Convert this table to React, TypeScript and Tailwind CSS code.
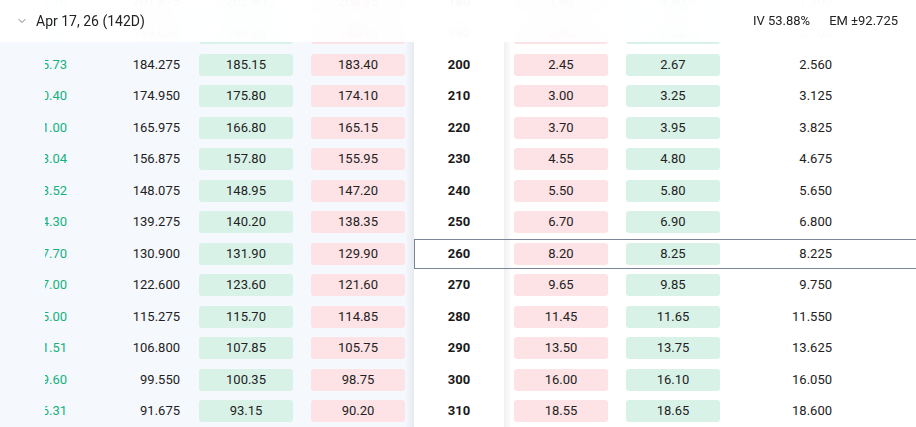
import { ChevronDown } from "lucide-react";

type Row = {
  strike: number;
  chg: string;
  mark: string;
  ask: string;
  bid: string;
  pBid: string;
  pAsk: string;
  pMark: string;
};

const rows: Row[] = [
  { strike: 180, chg: "+12.10", mark: "201.875", ask: "202.80", bid: "200.95", pBid: "1.60", pAsk: "1.80", pMark: "1.700" },
  { strike: 190, chg: "+11.44", mark: "193.050", ask: "193.95", bid: "192.15", pBid: "2.00", pAsk: "2.20", pMark: "2.100" },
  { strike: 200, chg: "+15.73", mark: "184.275", ask: "185.15", bid: "183.40", pBid: "2.45", pAsk: "2.67", pMark: "2.560" },
  { strike: 210, chg: "+10.40", mark: "174.950", ask: "175.80", bid: "174.10", pBid: "3.00", pAsk: "3.25", pMark: "3.125" },
  { strike: 220, chg: "+11.00", mark: "165.975", ask: "166.80", bid: "165.15", pBid: "3.70", pAsk: "3.95", pMark: "3.825" },
  { strike: 230, chg: "+13.04", mark: "156.875", ask: "157.80", bid: "155.95", pBid: "4.55", pAsk: "4.80", pMark: "4.675" },
  { strike: 240, chg: "+13.52", mark: "148.075", ask: "148.95", bid: "147.20", pBid: "5.50", pAsk: "5.80", pMark: "5.650" },
  { strike: 250, chg: "+14.30", mark: "139.275", ask: "140.20", bid: "138.35", pBid: "6.70", pAsk: "6.90", pMark: "6.800" },
  { strike: 260, chg: "+17.70", mark: "130.900", ask: "131.90", bid: "129.90", pBid: "8.20", pAsk: "8.25", pMark: "8.225" },
  { strike: 270, chg: "+17.00", mark: "122.600", ask: "123.60", bid: "121.60", pBid: "9.65", pAsk: "9.85", pMark: "9.750" },
  { strike: 280, chg: "+15.00", mark: "115.275", ask: "115.70", bid: "114.85", pBid: "11.45", pAsk: "11.65", pMark: "11.550" },
  { strike: 290, chg: "+11.51", mark: "106.800", ask: "107.85", bid: "105.75", pBid: "13.50", pAsk: "13.75", pMark: "13.625" },
  { strike: 300, chg: "+19.60", mark: "99.550", ask: "100.35", bid: "98.75", pBid: "16.00", pAsk: "16.10", pMark: "16.050" },
  { strike: 310, chg: "+16.31", mark: "91.675", ask: "93.15", bid: "90.20", pBid: "18.55", pAsk: "18.65", pMark: "18.600" },
];

function GreenPill({ value }: { value: string }) {
  return (
    <div className="w-[94px] h-[22px] rounded-[3px] bg-[#d9f2e8] flex items-center justify-center">
      {value}
    </div>
  );
}

function RedPill({ value }: { value: string }) {
  return (
    <div className="w-[94px] h-[22px] rounded-[3px] bg-[#fde2e6] flex items-center justify-center">
      {value}
    </div>
  );
}

function ChainRow({ row, atm }: { row: Row; atm: boolean }) {
  return (
    <div className="flex h-[31.5px] items-stretch">
      {/* calls */}
      <div className="flex w-[414px] shrink-0 items-center bg-[#f5f8fd]">
        <div className="ml-[44.5px] w-[30.5px] overflow-hidden flex justify-end pr-2 whitespace-nowrap text-[#15b27c]">
          {row.chg}
        </div>
        <div className="w-[113px] text-right pr-2">{row.mark}</div>
        <div className="w-[114px] pl-[11px]">
          <GreenPill value={row.ask} />
        </div>
        <div className="w-[103px] pl-[9px]">
          <RedPill value={row.bid} />
        </div>
        <div className="w-[9px] self-stretch bg-gradient-to-r from-transparent to-[rgba(40,50,80,0.07)]" />
      </div>

      {/* strike + puts */}
      <div className="relative flex w-[520px] shrink-0 items-stretch bg-white">
        <div className="w-[90px] flex items-center justify-center font-bold text-[#1a1a1a]">
          {row.strike}
        </div>
        <div className="w-[113px] flex items-center">
          <div className="w-[8px] self-stretch bg-gradient-to-r from-[rgba(40,50,80,0.07)] to-transparent" />
          <div className="ml-[2px]">
            <RedPill value={row.pBid} />
          </div>
        </div>
        <div className="w-[112px] pl-[9px] flex items-center">
          <GreenPill value={row.pAsk} />
        </div>
        <div className="w-[111px] flex items-center justify-end pr-2">{row.pMark}</div>
        {atm && (
          <div className="absolute inset-x-0 top-[1px] bottom-0 border border-[#7c849a] pointer-events-none" />
        )}
      </div>
    </div>
  );
}

export default function App() {
  return (
    <div
      className="relative h-[427px] w-[916px] overflow-hidden bg-white text-[13px] text-[#222]"
      style={{ fontFamily: "Roboto, 'Liberation Sans', sans-serif" }}
    >
      <div className="absolute inset-x-0 top-0 z-10 h-[42px] flex items-center justify-between bg-white/95 backdrop-blur-md px-4">
        <div className="flex items-center gap-2">
          <ChevronDown size={12} strokeWidth={1.6} className="text-[#555]" />
          <span className="text-[14px]">Apr 17, 26 (142D)</span>
        </div>
        <div className="flex items-center gap-[19px] pr-[2px]">
          <span>IV 53.88%</span>
          <span>EM ±92.725</span>
        </div>
      </div>

      <div className="mt-[-14.25px] flex flex-col">
        {rows.map((r) => (
          <ChainRow key={r.strike} row={r} atm={r.strike === 260} />
        ))}
      </div>
    </div>
  );
}
